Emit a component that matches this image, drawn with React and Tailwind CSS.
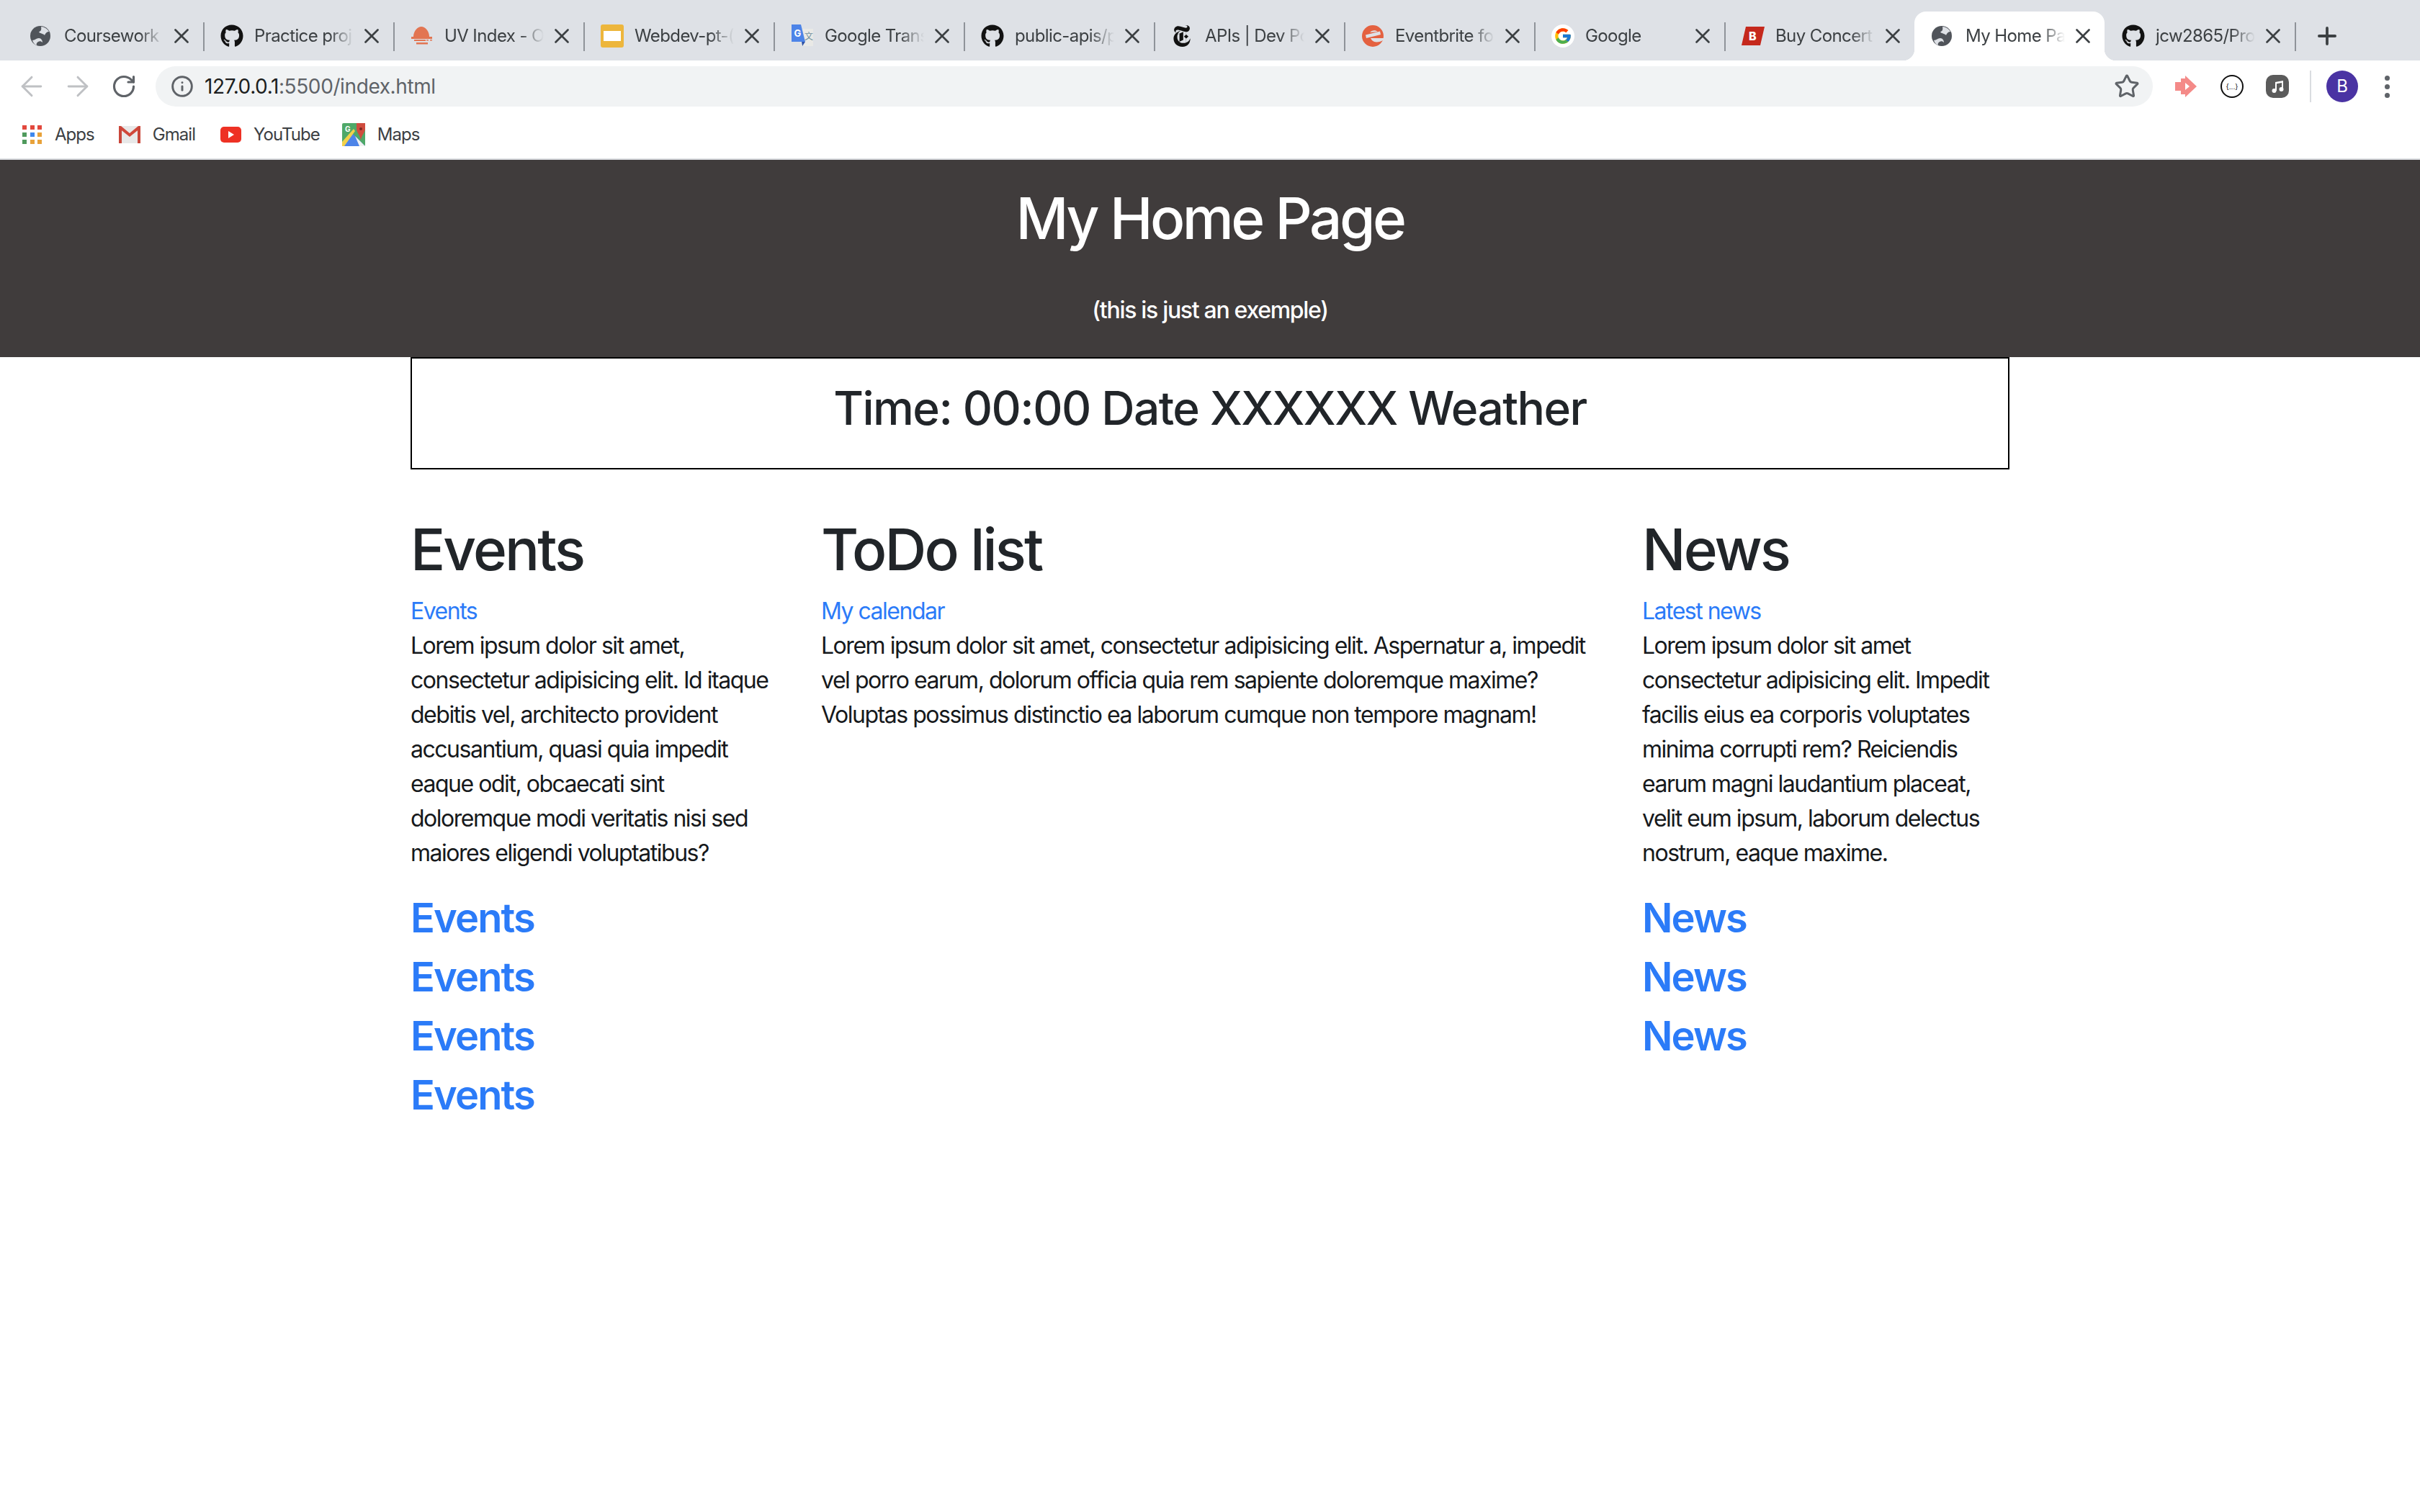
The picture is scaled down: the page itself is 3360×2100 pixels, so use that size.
import { FaGithub } from 'react-icons/fa';
import { FcGoogle } from 'react-icons/fc';
import { SiNewyorktimes } from 'react-icons/si';
import { X, Plus, ArrowLeft, ArrowRight, RotateCw, Star, Info } from 'lucide-react';

function Globe() {
  return (
    <svg viewBox="0 0 28 28" className="w-7 h-7">
      <circle cx="14" cy="14" r="14" fill="#50545a" />
      <path d="M3 20 C7 20 8 17 12 17 C15 17 17 20 17 23 C15 21 13 21 11 22 C9 23 8 25 9 27 C6 26 4 23 3 20 Z" fill="#dee1e6" />
      <path d="M15 1 C19 1 24 4 26 8 C23 8 21 10 20 13 C18 10 13 11 12 8 C14 8 16 6 15 1 Z" fill="#dee1e6" />
    </svg>
  );
}

function Sun() {
  return (
    <svg viewBox="0 0 32 28" className="w-8 h-7">
      <path d="M4 15 C4 7 10 1 15 1 C20 1 26 7 26 15 Z" fill="#e27552" />
      <rect x="1" y="15" width="29" height="3" fill="#e27552" />
      <rect x="5" y="19" width="16" height="2" fill="#e27552" />
      <rect x="22" y="19" width="3" height="1.5" fill="#e27552" />
      <rect x="27" y="19" width="3" height="1.5" fill="#e27552" />
      <rect x="8" y="23" width="16" height="2.5" fill="#e27552" />
    </svg>
  );
}

function Slides() {
  return (
    <div className="w-8 h-8 rounded-[3px] bg-[#edb63c] flex items-center justify-center">
      <div className="w-6 h-[14px] bg-white" />
    </div>
  );
}

function Translate() {
  return (
    <svg viewBox="0 0 32 32" className="w-8 h-8">
      <rect x="14" y="6" width="17" height="24" fill="#e9e9e6" />
      <path d="M1 0 H14 L20 24 H1 Z" fill="#4d84e8" />
      <path d="M15 24 H20 L16 30 Z" fill="#2f53a8" />
      <text x="4.5" y="17" fontSize="13" fontWeight="700" fill="#fff" fontFamily="Inter">G</text>
      <text x="19" y="21" fontSize="12" fill="#6f8f9f" fontFamily="Noto Sans CJK SC, sans-serif">文</text>
    </svg>
  );
}

function Eventbrite() {
  return (
    <svg viewBox="0 0 32 32" className="w-8 h-8">
      <circle cx="16" cy="16" r="15" fill="#e46140" />
      <path d="M6 14.5 L26 9.5 L27 14 L7 19 Z" fill="#dee1e6" />
      <path d="M12 11 C14 8 20 7 22.5 10 Z" fill="#dee1e6" />
      <path d="M13 19 L31 19 L31 21.5 C27 24 22 25 18 24 C15.5 23 14 21 13 19 Z" fill="#dee1e6" />
    </svg>
  );
}

function GoogleIcon() {
  return (
    <div className="w-8 h-8 rounded-full bg-white flex items-center justify-center">
      <FcGoogle className="w-[26px] h-[26px]" />
    </div>
  );
}

function BandIcon() {
  return (
    <svg viewBox="0 0 32 28" className="w-8 h-7">
      <path d="M6 1 H32 L26 27 H0 Z" fill="#c5281c" />
      <text x="10" y="20" fontSize="16" fontWeight="800" fill="#fff" fontFamily="Inter">B</text>
    </svg>
  );
}

function GithubIcon() {
  return <FaGithub className="w-8 h-8 text-[#121212]" />;
}

const tabs = [
  { title: 'Coursework |', icon: <Globe /> },
  { title: 'Practice proj', icon: <GithubIcon /> },
  { title: 'UV Index - O', icon: <Sun /> },
  { title: 'Webdev-pt-(', icon: <Slides /> },
  { title: 'Google Trans', icon: <Translate /> },
  { title: 'public-apis/p', icon: <GithubIcon /> },
  { title: 'APIs | Dev Po', icon: <SiNewyorktimes className="w-[30px] h-[30px] text-[#111]" /> },
  { title: 'Eventbrite fo', icon: <Eventbrite /> },
  { title: 'Google', icon: <GoogleIcon /> },
  { title: 'Buy Concert', icon: <BandIcon />, noSep: true },
  { title: 'My Home Pa', icon: <Globe />, active: true, noSep: true },
  { title: 'jcw2865/Pro', icon: <GithubIcon /> },
];

function Tab({ title, icon, active, noSep }) {
  return (
    <div className="relative w-[264px] h-[84px] pt-4 shrink-0">
      {active && (
        <>
          <div className="absolute left-[-1px] right-[1px] top-4 bottom-0 bg-white rounded-t-2xl" />
          <div className="absolute left-[-17px] bottom-0 w-4 h-4 bg-[radial-gradient(circle_at_0_0,#dee1e6_16px,#fff_16.5px)]" />
          <div className="absolute right-[-15px] bottom-0 w-4 h-4 bg-[radial-gradient(circle_at_100%_0,#dee1e6_16px,#fff_16.5px)]" />
        </>
      )}
      <div className="relative h-[68px] flex items-center pl-[23px]">
        <div className="w-8 h-8 flex items-center shrink-0">{icon}</div>
        <div className="ml-[15px] w-[138px] overflow-hidden whitespace-nowrap text-[24px] leading-8 tracking-[-0.025em] text-[#3c4043] [mask-image:linear-gradient(to_right,black_76%,transparent_100%)]">
          {title}
        </div>
        <X className="w-[34px] h-[34px] ml-2 text-[#3c4043] shrink-0" strokeWidth={1.9} />
      </div>
      {!noSep && <div className="absolute right-[-1px] top-[31px] w-[2px] h-10 bg-[#8f9399]" />}
    </div>
  );
}

function Gmail() {
  return (
    <svg viewBox="0 0 30 24" className="w-[30px] h-6">
      <rect x="0" y="0" width="30" height="24" fill="#e8e8e8" />
      <path d="M0 0 H3 L15 10 L27 0 H30 V3 L15 15 L0 3 Z" fill="#d0473a" />
      <rect x="0" y="1" width="4" height="23" fill="#c9463a" />
      <rect x="26" y="1" width="4" height="23" fill="#c9463a" />
    </svg>
  );
}

function YouTube() {
  return (
    <div className="w-[29px] h-[22px] rounded-[5px] bg-[#ee3124] flex items-center justify-center">
      <div className="w-0 h-0 border-y-[5px] border-y-transparent border-l-[8px] border-l-white" />
    </div>
  );
}

function Maps() {
  return (
    <svg viewBox="0 0 32 32" className="w-8 h-8">
      <rect width="32" height="32" rx="2" fill="#4fa868" />
      <path d="M0 32 L14 14 L32 32 Z" fill="#4d84e8" />
      <path d="M14 14 L32 32 H24 L18 18 Z" fill="#f1f1f1" />
      <path d="M0 26 L16 8 L18 11 L3 32 H0 Z" fill="#f2d24a" />
      <path d="M20 0 H32 V8 C32 13 27 16 26 24 C25 16 20 13 20 8 Z" fill="#cf4c3e" />
      <circle cx="26" cy="8" r="2" fill="#7a2a22" />
      <text x="4" y="12" fontSize="10" fontWeight="700" fill="#fff" fontFamily="Inter">G</text>
    </svg>
  );
}

function AppsGrid() {
  const colors = ['#e2483d', '#e2483d', '#e2483d', '#4f9a5d', '#3f88ee', '#e8a23a', '#4f9a5d', '#e8a23a', '#e8a23a'];
  return (
    <div className="grid grid-cols-3 gap-[4px] w-[28px]">
      {colors.map((c, i) => (
        <div key={i} className="w-[6px] h-[6px]" style={{ backgroundColor: c }} />
      ))}
    </div>
  );
}

function Bookmark({ icon, label, className = '' }) {
  return (
    <div className={`flex items-center ${className}`}>
      {icon}
      <span className="ml-[17px] text-[24px] leading-8 tracking-[-0.04em] text-[#3c4043]">{label}</span>
    </div>
  );
}

function ArrowIcon() {
  return (
    <svg viewBox="0 0 32 32" className="w-8 h-8">
      <path d="M1 10 H9 V5 H15 V1 L31 16 L15 31 V27 H9 V22 H1 Z" fill="#f48a88" />
      <path d="M15 11 L21 16 L15 21 Z" fill="#fff" />
    </svg>
  );
}

function Column({ title, link, text, links }) {
  return (
    <div>
      <h1 className="text-[80px] leading-[96px] font-medium text-[#212529] mb-[14px] tracking-[-0.036em]">{title}</h1>
      <a className="block text-[32px] leading-[48px] text-[#2b7bf8] tracking-[-0.047em]">{link}</a>
      <p className="text-[32px] leading-[48px] text-[#16191c] tracking-[-0.046em]">{text}</p>
      {links && (
        <div className="mt-[33px] flex flex-col gap-[15px]">
          {links.map((l, i) => (
            <a key={i} className="block text-[56px] leading-[67px] font-semibold text-[#2b7bf8] tracking-[-0.034em]">{l}</a>
          ))}
        </div>
      )}
    </div>
  );
}

export default function App() {
  return (
    <div className="w-[3360px] min-h-[2100px] bg-white font-['Inter',sans-serif]">
      <div className="h-[84px] bg-[#dee1e6] flex pl-[19px]">
        {tabs.map((t) => (
          <Tab key={t.title} {...t} />
        ))}
        <div className="h-[84px] pt-4 flex items-center pl-[25px]">
          <Plus className="w-[38px] h-[38px] text-[#3c4043]" strokeWidth={2.4} />
        </div>
      </div>

      <div className="h-[64px] flex items-end">
        <div className="h-14 w-full flex items-center pl-[22px]">
          <ArrowLeft className="w-11 h-11 text-[#bfc1c4] shrink-0" strokeWidth={1.6} />
          <ArrowRight className="w-11 h-11 text-[#bfc1c4] ml-[20px] shrink-0" strokeWidth={1.6} />
          <RotateCw className="w-9 h-9 text-[#5f6368] ml-[24px] shrink-0" strokeWidth={2.1} />
          <div className="ml-[26px] w-[2773px] h-14 rounded-full bg-[#f1f3f4] flex items-center pl-[21px] pr-[18px] shrink-0">
            <Info className="w-8 h-8 text-[#5f6368]" strokeWidth={2.2} />
            <span className="ml-[15px] text-[28px] leading-9 text-[#5f6368] tracking-[-0.014em]">
              <span className="text-[#1c1e20]">127.0.0.1</span>:5500/index.html
            </span>
            <Star className="w-9 h-9 text-[#5f6368] ml-auto" strokeWidth={2} />
          </div>
          <div className="ml-[30px] flex items-center shrink-0">
            <ArrowIcon />
            <div className="ml-[32px] w-8 h-8 rounded-full border-2 border-[#111] flex items-center justify-center text-[10px] text-[#111] whitespace-nowrap">{'{...}'}</div>
            <div className="ml-[31px] w-8 h-8 rounded-[10px] bg-[#5b5b5b] flex items-center justify-center">
              <svg viewBox="0 0 24 24" className="w-6 h-6" fill="#fff"><path d="M9 18V6l11-2v12h-2V7l-7 1.3V18h-2z" /><circle cx="7.5" cy="18" r="3" /><circle cx="17.5" cy="16" r="3" /></svg>
            </div>
            <div className="ml-[29px] w-[2px] h-[44px] bg-[#dadce0]" />
            <div className="ml-[21px] w-[44px] h-[44px] rounded-full bg-[#4a33a3] text-white text-[24px] flex items-center justify-center">B</div>
            <div className="ml-[37px] flex flex-col gap-[5px]">
              <div className="w-[7px] h-[7px] rounded-full bg-[#5f6368]" />
              <div className="w-[7px] h-[7px] rounded-full bg-[#5f6368]" />
              <div className="w-[7px] h-[7px] rounded-full bg-[#5f6368]" />
            </div>
          </div>
        </div>
      </div>

      <div className="h-[74px] pt-[6px] border-b-2 border-[#dadce0] flex items-center pl-[31px]">
        <Bookmark icon={<AppsGrid />} label="Apps" />
        <Bookmark icon={<Gmail />} label="Gmail" className="ml-[34px]" />
        <Bookmark icon={<YouTube />} label="YouTube" className="ml-[35px]" />
        <Bookmark icon={<Maps />} label="Maps" className="ml-[31px]" />
      </div>

      <header className="h-[274px] bg-[#403c3c] text-white text-center pt-[33px]">
        <h1 className="text-[80px] leading-[96px] font-medium tracking-[-0.044em]">My Home Page</h1>
        <p className="mt-[56px] text-[32px] leading-[48px] font-medium tracking-[-0.041em]">(this is just an exemple)</p>
      </header>

      <main className="w-[2220px] mx-auto">
        <div className="h-[156px] border-2 border-black text-center pt-[30px]">
          <h2 className="text-[64px] leading-[77px] font-medium text-[#212529] tracking-[-0.024em]">Time: 00:00 Date XXXXXX Weather</h2>
        </div>
        <div className="mt-[63px] grid grid-cols-[510px_1080px_510px] gap-x-[60px]">
          <Column
            title="Events"
            link="Events"
            text="Lorem ipsum dolor sit amet, consectetur adipisicing elit. Id itaque debitis vel, architecto provident accusantium, quasi quia impedit eaque odit, obcaecati sint doloremque modi veritatis nisi sed maiores eligendi voluptatibus?"
            links={['Events', 'Events', 'Events', 'Events']}
          />
          <Column
            title="ToDo list"
            link="My calendar"
            text="Lorem ipsum dolor sit amet, consectetur adipisicing elit. Aspernatur a, impedit vel porro earum, dolorum officia quia rem sapiente doloremque maxime? Voluptas possimus distinctio ea laborum cumque non tempore magnam!"
          />
          <Column
            title="News"
            link="Latest news"
            text="Lorem ipsum dolor sit amet consectetur adipisicing elit. Impedit facilis eius ea corporis voluptates minima corrupti rem? Reiciendis earum magni laudantium placeat, velit eum ipsum, laborum delectus nostrum, eaque maxime."
            links={['News', 'News', 'News']}
          />
        </div>
      </main>
    </div>
  );
}
